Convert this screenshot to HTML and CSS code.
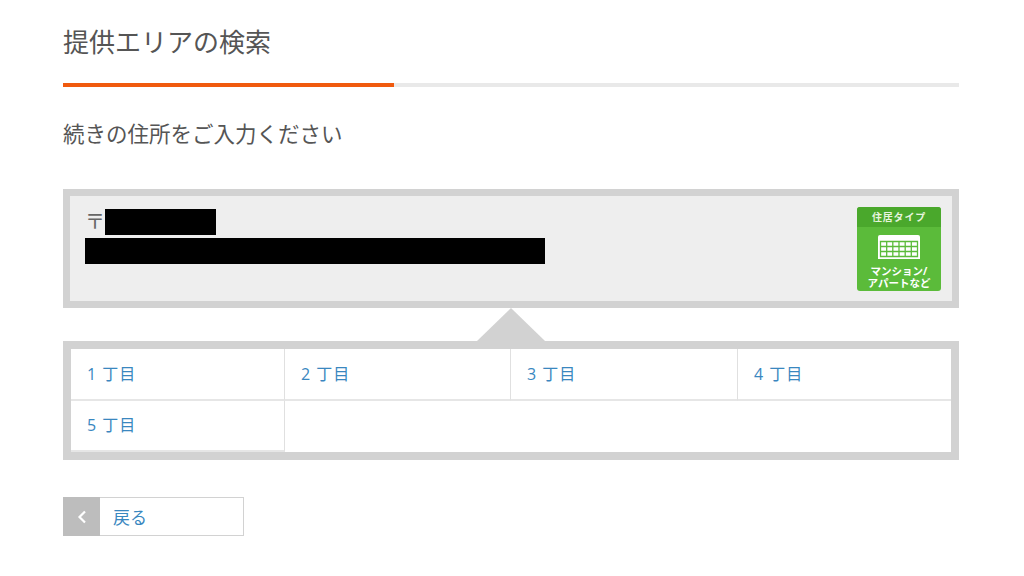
FILE: index.html
```html
<!DOCTYPE html>
<html lang="ja">
<head>
  <meta charset="UTF-8">
  <title>提供エリアの検索</title>
  <link rel="stylesheet" href="styles.css">
</head>
<body>
  <div class="page">
    <h1 class="title">提供エリアの検索</h1>
    <div class="progress"><div class="progress-fill"></div></div>
    <p class="lead">続きの住所をご入力ください</p>

    <div class="address-box">
      <div class="address">
        <div class="zip-row">
          <span class="zip-mark">〒</span>
          <span class="mask mask-zip"></span>
        </div>
        <div class="mask mask-address"></div>
      </div>
      <div class="badge">
        <div class="badge-head">住居タイプ</div>
        <div class="badge-body">
          <svg class="badge-icon" width="42" height="24" viewBox="0 0 42 24">
            <path fill="#fff" d="M2 0h38a2 2 0 0 1 2 2v22H0V2a2 2 0 0 1 2-2z"/>
            <path fill="none" stroke="#5bbb3a" stroke-width="1.300" d="M2.500 6.500h37v15h-37zM2.500 11.500h37M2.500 16.500h37M8.700 6.500v15M14.800 6.500v15M21 6.500v15M27.200 6.500v15M33.300 6.500v15"/>
          </svg>
          <div class="badge-text">マンション/<br>アパートなど</div>
        </div>
      </div>
    </div>

    <div class="list-box">
      <div class="arrow"></div>
      <div class="cho-grid">
        <a class="cho" href="#">1 丁目</a>
        <a class="cho" href="#">2 丁目</a>
        <a class="cho" href="#">3 丁目</a>
        <a class="cho" href="#">4 丁目</a>
        <a class="cho" href="#">5 丁目</a>
      </div>
    </div>

    <a class="back" href="#">
      <span class="back-icon">
        <svg width="10" height="14" viewBox="0 0 10 14"><path fill="none" stroke="#fff" stroke-width="2.200" d="M8 1.500 2.500 7 8 12.500"/></svg>
      </span>
      <span class="back-label">戻る</span>
    </a>
  </div>
</body>
</html>
```

FILE: styles.css
```css
* {
  box-sizing: border-box;
}

body {
  margin: 0;
  background-color: #fff;
  color: #555;
  font-family: "Open Sans", "Noto Sans CJK JP", sans-serif;
}

.page {
  width: 896px;
  margin-left: 63px;
  padding-top: 24px;
}

.title {
  margin: 0;
  height: 59px;
  font-size: 26px;
  line-height: 36px;
  font-weight: 400;
  color: #555;
}

.progress {
  height: 4px;
  background-color: #e9e9e9;
}

.progress-fill {
  width: 331px;
  height: 4px;
  background-color: #f05a0e;
}

.lead {
  margin: 33px 0 42px;
  height: 27px;
  font-size: 21.500px;
  line-height: 27px;
  color: #555;
}

.address-box {
  display: flex;
  justify-content: space-between;
  height: 119px;
  border: 7px solid #d2d2d2;
  background-color: #eee;
  padding: 11px 11px 0 15px;
}

.address {
  padding-top: 2px;
}

.zip-row {
  display: flex;
  align-items: center;
  height: 26px;
  margin-bottom: 3px;
}

.zip-mark {
  width: 20px;
  font-size: 20px;
  line-height: 26px;
  color: #666;
}

.mask {
  background-color: #000;
  height: 26px;
}

.mask-zip {
  width: 111px;
}

.mask-address {
  width: 460px;
}

.badge {
  width: 84px;
  height: 84px;
  border-radius: 3px;
  overflow: hidden;
  background-color: #5bbb3a;
  color: #fff;
  text-align: center;
}

.badge-head {
  height: 20px;
  background-color: #4aa82c;
  color: #e6f4de;
  font-size: 10px;
  line-height: 20px;
  font-weight: 700;
  letter-spacing: 0.800px;
}

.badge-body {
  padding-top: 8px;
}

.badge-icon {
  display: block;
  margin: 0 auto 6px;
}

.badge-text {
  font-size: 10.500px;
  line-height: 12px;
  font-weight: 700;
}

.list-box {
  position: relative;
  margin-top: 33px;
  height: 119px;
  border: 8px solid #d2d2d2;
  background-color: #fff;
}

.arrow {
  position: absolute;
  left: 406px;
  top: -41px;
  width: 0;
  height: 0;
  border-left: 34px solid transparent;
  border-right: 34px solid transparent;
  border-bottom: 33px solid #d2d2d2;
}

.cho-grid {
  display: grid;
  grid-template-columns: 214px 226px 227px 213px;
  grid-template-rows: 52px 51px;
}

.cho {
  display: flex;
  align-items: center;
  padding: 0 0 3px 16px;
  border-right: 1px solid #e0e0e0;
  border-bottom: 2px solid #e6e6e6;
  color: #3a87bf;
  font-size: 16px;
  letter-spacing: 1px;
  white-space: pre;
  text-decoration: none;
}

.cho:nth-child(4) {
  border-right: none;
}

.back {
  display: flex;
  align-items: stretch;
  width: 181px;
  height: 39px;
  margin-top: 37px;
  border: 1px solid #d2d2d2;
  text-decoration: none;
}

.back-icon {
  display: flex;
  align-items: center;
  justify-content: center;
  width: 37px;
  margin: -1px 0 -1px -1px;
  background-color: #bdbdbd;
}

.back-label {
  align-self: center;
  margin-left: 13px;
  font-size: 17px;
  color: #3a87bf;
}
```
